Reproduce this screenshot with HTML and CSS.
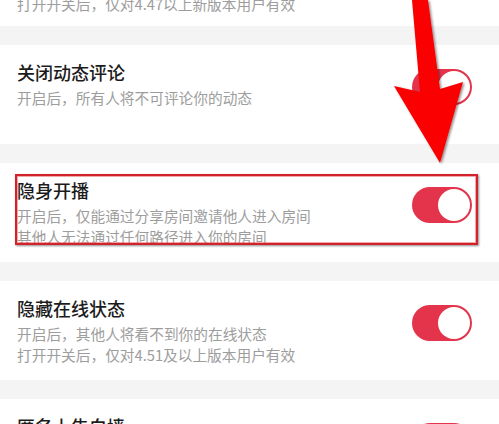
FILE: index.html
```html
<!DOCTYPE html>
<html lang="zh-CN">
<head>
  <meta charset="UTF-8">
  <title>隐私设置</title>
  <link rel="stylesheet" href="styles.css">
</head>
<body>

<div class="page">
  <div class="item item-top">
    <p class="desc desc-cut">打开开关后，仅对4.47以上新版本用户有效</p>
  </div>

  <div class="item">
    <div class="text">
      <h3 class="title">关闭动态评论</h3>
      <p class="desc">开启后，所有人将不可评论你的动态</p>
    </div>
    <span class="switch on"></span>
  </div>

  <div class="item">
    <div class="text">
      <h3 class="title">隐身开播</h3>
      <p class="desc">开启后，仅能通过分享房间邀请他人进入房间</p>
      <p class="desc">其他人无法通过任何路径进入你的房间</p>
    </div>
    <span class="switch on"></span>
    <div class="mark-box"></div>
  </div>

  <div class="item">
    <div class="text">
      <h3 class="title">隐藏在线状态</h3>
      <p class="desc">开启后，其他人将看不到你的在线状态</p>
      <p class="desc">打开开关后，仅对4.51及以上版本用户有效</p>
    </div>
    <span class="switch on"></span>
  </div>

  <div class="item">
    <div class="text">
      <h3 class="title">匿名上告白墙</h3>
    </div>
    <span class="switch on"></span>
  </div>

  <!-- 标注箭头 -->
  <svg class="arrow" width="499" height="424" viewBox="0 0 499 424">
    <defs>
      <filter id="shade" x="-20%" y="-20%" width="140%" height="140%">
        <feDropShadow dx="1.5" dy="1" stdDeviation="1" flood-color="#000" flood-opacity="0.45"/>
      </filter>
    </defs>
    <polygon points="412,0 428,0 440,89 463,82 440,163 394,86 420,92" fill="#fa0000" filter="url(#shade)"/>
  </svg>
</div>

</body>
</html>
```

FILE: styles.css
```css
body {
  margin: 0;
  padding: 0;
  background-color: #f4f4f4;
  font-family: "Noto Sans CJK SC", "Noto Sans", sans-serif;
}
.page {
  position: relative;
  width: 499px;
  height: 424px;
  overflow: hidden;
}
.item {
  position: relative;
  display: flex;
  justify-content: space-between;
  align-items: flex-start;
  height: 99px;
  padding: 0 27px 0 17px;
  margin-bottom: 19px;
  background-color: #fff;
  box-sizing: border-box;
}
.item-top {
  height: 26px;
  overflow: hidden;
}
.text {
  padding-top: 14px;
}
.title {
  margin: 0 0 2px;
  font-size: 18px;
  line-height: 26px;
  font-weight: 500;
  color: #1c1c1c;
}
.desc {
  margin: 0;
  font-size: 14.7px;
  line-height: 21px;
  color: #9d9d9d;
}
.desc-cut {
  margin-top: -7px;
}
.switch {
  position: relative;
  width: 60px;
  height: 36px;
  margin-top: 24px;
  border-radius: 18px;
  background-color: #e4344b;
}
.switch::after {
  content: "";
  position: absolute;
  top: 2px;
  right: 2px;
  width: 32px;
  height: 32px;
  border-radius: 50%;
  background-color: #fff;
}
.mark-box {
  position: absolute;
  left: 15px;
  top: 11px;
  width: 463px;
  height: 71px;
  border: 2px solid #d2232b;
  box-sizing: border-box;
  box-shadow: 1px 1px 2px rgba(0, 0, 0, 0.45), inset 0 0 0 1px rgba(230, 80, 90, 0.5);
}
.arrow {
  position: absolute;
  top: 0;
  left: 0;
}
```
